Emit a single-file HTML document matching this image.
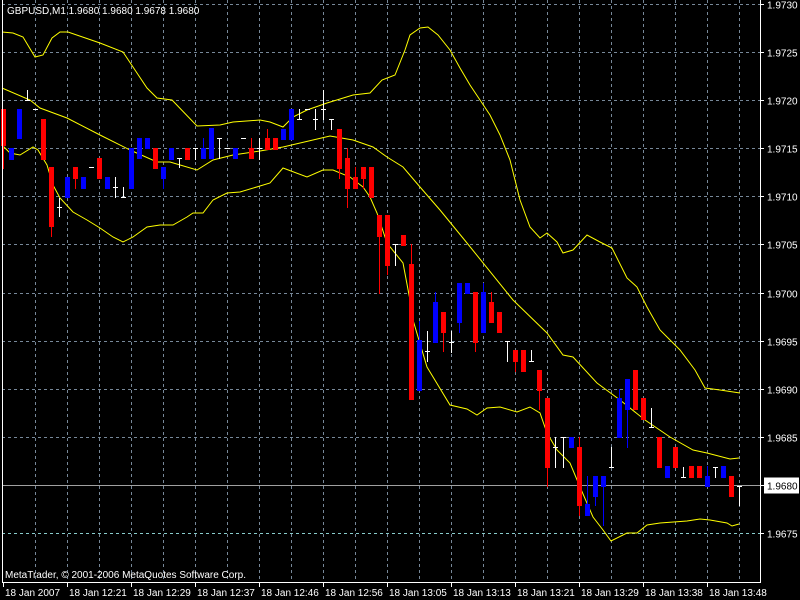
<!DOCTYPE html>
<html><head><meta charset="utf-8"><style>
html,body{margin:0;padding:0;background:#000;width:800px;height:600px;overflow:hidden}
svg{display:block}
text{font-family:"Liberation Sans",sans-serif;font-size:10px;fill:#fff}
</style></head><body>
<svg id="s" width="800" height="600" xmlns="http://www.w3.org/2000/svg"></svg>
<script>
var s=document.getElementById('s'),o='';
// grid horizontal
var labels=['1.9730','1.9725','1.9720','1.9715','1.9710','1.9705','1.9700','1.9695','1.9690','1.9685','1.9680','1.9675'];
for(var i=0;i<12;i++){var y=Math.round(3.5+i*48.18)+0.5;
 if(i==10){o+='<line x1="2" y1="'+y+'" x2="760" y2="'+y+'" stroke="#a0a0a0"/>';}
 else if(i==11){o+='<line x1="2" y1="'+y+'" x2="760" y2="'+y+'" stroke="#8cc" stroke-dasharray="3,3"/>';}
 else o+='<line x1="2" y1="'+y+'" x2="760" y2="'+y+'" stroke="#778899" stroke-dasharray="3,3"/>';
 o+='<line x1="760" y1="'+y+'" x2="764" y2="'+y+'" stroke="#fff"/>';
 if(i==10){o+='<rect x="764" y="'+(y-8)+'" width="35" height="16" fill="#fff"/><text x="767" y="'+(y+4)+'" style="fill:#000">'+labels[i]+'</text>';}
 else o+='<text x="767" y="'+(y+4)+'">'+labels[i]+'</text>';}
for(var k=1;k<=23;k++){var x=3+32*k+0.5;o+='<line x1="'+x+'" y1="0" x2="'+x+'" y2="582" stroke="#778899" stroke-dasharray="3,3"/>';}
// bands
function pl(p){return '<polyline fill="none" stroke="#ff0" stroke-width="1" points="'+p+'"/>';}
o+=pl('2,32 13,33 23,37 35,57 43,55 52,38 60,32 68,32 100,43 123,52 133,67 147,88 157,98 172,100 197,126 220,125 233,122 260,120 270,122 283,127 293,117 307,110 327,103 353,95 370,93 382,80 395,75 405,50 410,35 420,28 428,27 438,35 450,50 460,68 470,85 480,100 490,115 500,135 510,160 520,200 530,227 540,238 547,233 557,242 563,253 573,250 587,235 600,242 612,248 627,278 637,287 647,307 660,330 680,350 695,370 705,388 720,390 740,393');
o+=pl('2,88 30,100 40,108 67,118 100,135 130,150 157,162 170,162 197,170 213,160 233,155 260,151 283,147 330,136 353,140 373,147 387,157 403,167 420,187 440,210 467,243 513,300 547,333 563,355 573,357 597,383 620,400 645,420 670,437 693,450 707,453 730,459 739,458');
o+=pl('2,145 10,153 20,155 33,147 38,150 47,165 53,185 60,198 73,212 87,220 100,228 113,237 123,242 133,237 147,227 160,225 173,225 187,217 193,213 203,213 213,200 227,193 240,192 270,183 283,168 307,177 323,170 333,170 350,177 363,187 370,197 377,213 387,243 403,263 410,300 413,320 427,367 450,405 467,409 477,415 487,408 500,407 517,412 530,407 540,413 547,433 557,450 570,463 580,487 593,517 603,530 611,541 627,533 637,533 647,525 660,523 687,521 700,519 710,520 727,523 732,526 739,524');
// candles: [k,type,bodyTop,bodyBot,high,low]
var c=[[0,'r',109,145,109,168],[1,'b',148,159],[2,'b',109,138],[3,'w',100,100,90,100],[4,'w',109,109],[5,'r',119,159],[6,'r',167,226,167,236],[7,'w',207,207,198,216],[8,'b',177,197],[9,'r',167,178,167,188],[10,'b',177,188],[11,'w',167,167],[12,'r',158,178],[13,'b',177,188],[14,'w',187,187,177,197],[15,'w',197,197,187,197],[16,'b',148,188],[17,'b',138,158],[18,'b',138,148],[19,'r',148,168],[20,'b',167,178,167,188],[21,'b',148,159],[22,'w',158,158,158,167],[23,'r',148,159],[24,'w',148,148,148,159],[25,'b',148,158,138,158],[26,'b',128,158],[27,'w',138,138,138,158],[28,'w',148,148],[29,'b',148,158],[30,'w',138,138],[31,'r',148,158,138,158],[32,'w',148,148,138,159],[33,'r',138,149,129,149],[34,'r',138,149],[35,'b',129,139],[36,'b',109,139],[37,'w',119,119,109,119],[38,'w',109,109],[39,'w',119,119,109,129],[40,'w',109,109,90,119],[41,'w',119,119,119,129],[42,'r',129,168,129,178],[43,'r',158,188,148,207],[44,'r',177,188,167,188],[45,'r',167,178,167,188],[46,'r',167,197],[47,'r',215,236,215,293],[48,'r',215,265,215,274],[49,'w',244,244,244,265],[50,'r',235,245],[51,'r',264,399,244,399],[52,'b',340,390,321,390],[53,'w',351,351,331,361],[54,'b',302,342,292,342],[55,'r',312,332,312,351],[56,'w',342,342,331,352],[57,'b',283,322,283,332],[58,'b',283,293],[59,'r',292,342,292,351],[60,'b',292,332,283,332],[61,'r',302,322,292,322],[62,'r',312,332],[63,'w',341,341,341,361],[64,'r',350,361,350,371],[65,'r',350,371],[66,'w',361,361,350,361],[67,'r',370,390,370,409],[68,'r',398,467,398,486],[69,'w',447,447,437,467],[70,'w',437,437,437,467],[71,'b',437,447],[72,'r',447,505,437,515],[73,'b',504,515,476,515],[74,'b',476,496,476,505],[75,'b',476,486,476,525],[76,'w',467,467,447,467],[77,'b',398,437,389,437],[78,'b',379,409,379,447],[79,'r',370,409],[80,'r',398,419],[81,'w',427,427,408,427],[82,'r',437,467],[83,'b',466,477],[84,'r',447,467],[85,'w',477,477,467,477],[86,'r',466,477],[87,'r',466,477],[88,'b',476,486,466,486],[89,'w',467,467,467,477],[90,'b',466,477],[91,'r',476,496],[92,'w',486,486,486,505]];
var col={r:'#f00',b:'#00f',w:'#fff'};
c.forEach(function(d){var x=3+8*d[0],t=d[1],cl=col[t],h=d[4]||d[2],l=d[5]||d[3];
 if(h<d[2]||l>d[3])o+='<rect x="'+x+'" y="'+h+'" width="1" height="'+(l-h+1)+'" fill="'+cl+'"/>';
 if(t=='w'){o+='<rect x="'+x+'" y="'+h+'" width="1" height="'+(l-h+1)+'" fill="#fff"/><rect x="'+(x-2)+'" y="'+d[2]+'" width="5" height="1" fill="#fff"/>';}
 else o+='<rect x="'+(x-2)+'" y="'+d[2]+'" width="5" height="'+(d[3]-d[2]+1)+'" fill="'+cl+'"/>';});
// borders
o+='<line x1="2.5" y1="0" x2="2.5" y2="582" stroke="#fff"/><line x1="760.5" y1="0" x2="760.5" y2="582" stroke="#fff"/><line x1="2" y1="582.5" x2="761" y2="582.5" stroke="#fff"/>';
var tl=['18 Jan 2007','18 Jan 12:21','18 Jan 12:29','18 Jan 12:37','18 Jan 12:46','18 Jan 12:56','18 Jan 13:05','18 Jan 13:13','18 Jan 13:21','18 Jan 13:29','18 Jan 13:38','18 Jan 13:48'];
for(var j=0;j<12;j++){var x=3+64*j;o+='<line x1="'+(x+0.5)+'" y1="582" x2="'+(x+0.5)+'" y2="587" stroke="#fff"/><text x="'+(x+2)+'" y="596">'+tl[j]+'</text>';}
o+='<text x="7" y="14">GBPUSD,M1  1.9680 1.9680 1.9678 1.9680</text>';
o+='<text x="5" y="578">MetaTrader, © 2001-2006 MetaQuotes Software Corp.</text>';
s.innerHTML=o;
</script>
</body></html>
